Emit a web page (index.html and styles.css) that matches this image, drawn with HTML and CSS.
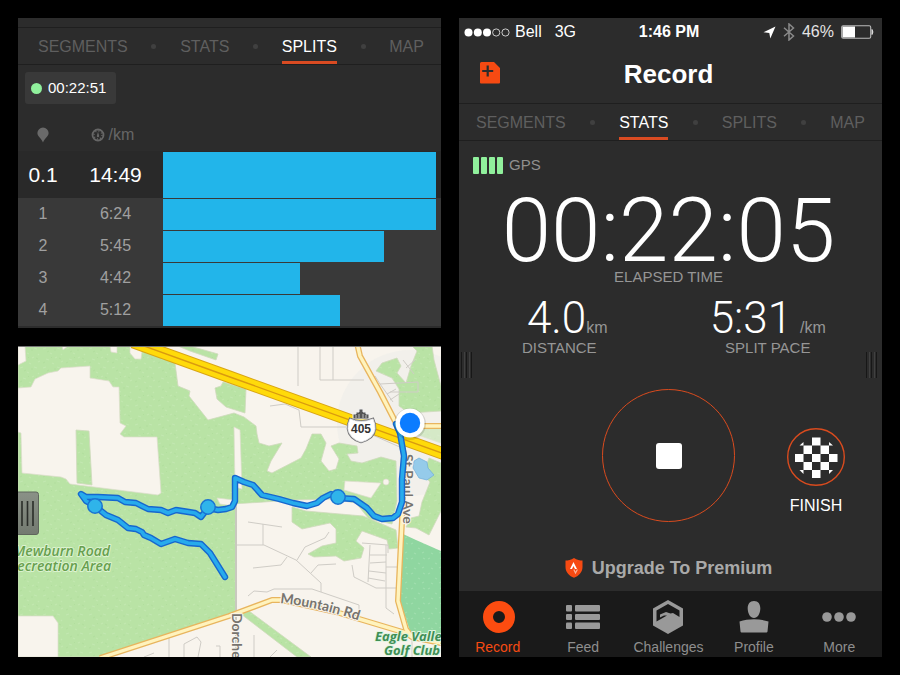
FILE: index.html
```html
<!DOCTYPE html>
<html lang="en">
<head>
<meta charset="utf-8">
<meta name="viewport" content="width=device-width, initial-scale=1">
<title>Record</title>
<link rel="stylesheet" href="styles.css">
</head>
<body>
<main class="board">
  <div class="column">
    <section class="panel splits">
      <div class="strip"></div>
      <nav class="tabs">
        <a href="#segments">SEGMENTS</a><i class="dot"></i>
        <a href="#stats">STATS</a><i class="dot"></i>
        <a href="#splits" class="current">SPLITS</a><i class="dot"></i>
        <a href="#map">MAP</a>
      </nav>
      <div class="chip"><i class="live"></i>00:22:51</div>
      <table class="split-table">
        <thead>
          <tr>
            <th class="lap"><svg width="12" height="16" viewBox="0 0 12 16"><path d="M6 0.500a5.600 5.600 0 0 1 5.600 5.600C11.600 9.300 8 11 6 15.500 4 11 .4 9.300 .4 6.100A5.600 5.600 0 0 1 6 .5z" fill="#6a6a6a"/></svg></th>
            <th class="pace"><span class="pace-head"><svg width="14" height="14" viewBox="0 0 14 14"><circle cx="7" cy="7" r="5.500" fill="none" stroke="#666" stroke-width="1.800"/><circle cx="7" cy="7" r="4" fill="none" stroke="#666" stroke-width="1.500" stroke-dasharray="1 2.140"/><path d="M7 3.500 8.200 8a1.200 1.200 0 0 1-2.400 0z" fill="#666"/></svg>/km</span></th>
            <th></th>
          </tr>
        </thead>
        <tbody>
          <tr class="now"><td>0.1</td><td>14:49</td><td class="track"><div class="bar" style="width:100%"></div></td></tr>
          <tr><td>1</td><td>6:24</td><td class="track"><div class="bar" style="width:100%"></div></td></tr>
          <tr><td>2</td><td>5:45</td><td class="track"><div class="bar" style="width:81%"></div></td></tr>
          <tr><td>3</td><td>4:42</td><td class="track"><div class="bar" style="width:50%"></div></td></tr>
          <tr><td>4</td><td>5:12</td><td class="track"><div class="bar" style="width:65%"></div></td></tr>
        </tbody>
      </table>
    </section>

    <section class="panel map">
      <svg class="map-art" viewBox="0 0 423 311" role="img" aria-label="Route map">
        <defs>
          <pattern id="grass" width="23" height="19" patternUnits="userSpaceOnUse">
            <rect width="23" height="19" fill="#b9e3a5"/>
            <path d="M2 3l3-1M9 7l2 1M16 2l3 1M5 13l3 1M14 12l2-1M20 16l2-1M11 17l2 1M20 8l1 1" stroke="#c2e8b0" stroke-width="1.200"/>
            <path d="M6 6l2-1M13 4l2 0M18 12l2 1M2 17l2-1M10 11l1 1" stroke="#b1de9d" stroke-width="1"/>
          </pattern>
          <pattern id="golf" width="17" height="15" patternUnits="userSpaceOnUse">
            <rect width="17" height="15" fill="#8fd6a0"/>
            <path d="M2 3l2-1M9 7l2 1M14 2l2 1M5 12l2 1M13 12l2-1" stroke="#a0deae" stroke-width="1.200"/>
          </pattern>
          <path id="avenue" d="M385 108V190"/>
          <path id="mountain" d="M262 257Q300 261 345 276"/>
          <path id="route" d="M207 231 192 207 183 198 170 197 157 193 143 198 133 192 126 189 124 186 118 183 110 182 100 174 88 169 77 160 68 155 63 148 68 151 80 151 100 152 107 156 118 157 130 163 143 164 150 167 158 164 177 167 183 171 190 162 200 164 208 163 214 161 217 155V132L226 136 235 139 244 149 261 153 275 157 289 160 299 157 305 152 313 148 320 152 336 153 349 162 356 170 364 173 375 172 380 168 384 156V133L386 110 382 87 378 78"/>
          <linearGradient id="grip" x1="0" y1="0" x2="0" y2="1"><stop offset="0" stop-color="#8a9187"/><stop offset="1" stop-color="#737a70"/></linearGradient>
        </defs>
        <rect width="423" height="311" fill="#f8f4ed"/>
        <circle cx="392" cy="77" r="73" fill="#eeeeea" opacity=".65"/>
        <g fill="url(#grass)" stroke="#cfd9bd" stroke-width=".8">
          <path d="M0 0H120L157 17 160 40 172 45 171 50 190 74 216 67 226 71 238 80 239 88 241 97 251 100 264 97 253 115 249 125 254 127 283 112 288 103 294 88 303 88 308 97 303 115 311 125 318 123 321 113 313 100 321 97 339 100 340 107 329 108 333 115 344 117 363 111 378 115 379 155 374 178 351 173 338 157 313 153 274 154 218 158V268L82 311H0z"/>
          <path d="M197 42 203 40 205 36 228 43 227 67 208 61 199 53z"/>
          <path d="M160 0H172L200 8 198 14 172 5z"/>
          <path d="M274 161 288 165 345 170 378 184 380 202 371 203 369 194 344 185 338 195 346 202 343 212 326 215 318 210 296 211 290 208 304 200 318 197 318 183 312 177 284 183 274 176z"/>
          <path d="M358 25 364 17 379 12 383 20 379 27 388 37 393 20 399 5 394 0H414L416 14 423 40V65L391 67 381 60 381 43 374 32z"/>
          <path d="M397 88 423 97V80H406z" opacity=".5"/>
          <path d="M423 117 411 112 405 128 412 136 404 156 401 170 393 172 388 181 398 182 411 189 423 165z"/>
          <path d="M223 268 231 265 293 311H279z"/>
        </g>
        <g fill="#f8f4ed" stroke="#dddccb" stroke-width=".7">
          <path d="M0 42 13 41 17 33 30 27 40 25 43 22 72 20V32L91 35 95 41H101L102 77 108 80 102 88 106 91 139 91 143 147 140 149 52 138 48 133 43 131 4 127 3 87 0 86z"/>
          <path d="M0 0H7L8 15 0 19zM92 0H99V7L93 6zM112 0H119L124 5 123 13 117 13 112 7zM44 0H50L45 4z"/>
          <path d="M0 270H35L40 277V311H0z"/>
          <path d="M216 81 222 84 224 143 217 141zM327 135 363 137 353 152 326 144z"/>
          <path d="M199 152 216 154V160L202 158z"/>
          <path d="M220 158 262 157 273 162 273 177 218 177z" stroke="none"/>
          <circle cx="368" cy="136" r="3"/>
        </g>
        <path d="M58 84 71 85 74 139 59 137z" fill="url(#grass)" stroke="#cfd9bd" stroke-width=".8"/>
        <path d="M396 115 401 112 409 116 410 122 416 129 409 134 401 132 395 122z" fill="#95cbea" stroke="#6faed8" stroke-width=".7"/>
        <path d="M385 188 398 194 423 205V296L394 291 382 255z" fill="url(#golf)"/>
        <g fill="none" stroke="#cfccc6" stroke-width="1">
          <path d="M280 0V40M302 0V34H346M315 0V34M252 60 267 58 281 64 283 81H328M350 87 384 102M357 30 362 38 400 36V46H372M362 38 375 56M372 54 381 48M369 48 378 43M385 14 396 28M388 22 397 14"/>
          <path d="M230 176 264 181M245 178V199M218 199H246L278 214 303 237V246M235 222 263 219 269 211M279 214 287 201 307 192 311 186M293 227 300 219 318 218"/>
          <path d="M344 197 370 199V207M352 199 350 236M352 209H369M352 217 368 216M351 225 368 227M350 232 367 235M368 199V262L376 268M334 219 336 231 358 242H378M368 221H379"/>
          <path d="M230 250 236 245 249 246 256 243 294 243 341 259V269M151 291V311M166 311V298L179 291 183 296 180 311M198 300H202V311M126 311 136 307M236 289V311M252 311 259 304M394 292V311"/>
          <path d="M218 156V311" stroke="#c9c9bf" stroke-width="2"/>
        </g>
        <g fill="none" stroke-linejoin="round">
          <g stroke="#e8b55e" stroke-width="6">
            <path d="M339 -3 342 10 362 46 378 77 386 108 384 175 380 255 388 283 394 291 423 297"/>
            <path d="M82 312 211 270 254 254H264L318 266 388 287 394 291M395 80H423"/>
          </g>
          <g stroke="#fff3bd" stroke-width="3.400">
            <path d="M339 -3 342 10 362 46 378 77 386 108 384 175 380 255 388 283 394 291 423 297"/>
            <path d="M82 312 211 270 254 254H264L318 266 388 287 394 291M395 80H423"/>
          </g>
          <path d="M115 -4 212 31 429 109" stroke="#d9a514" stroke-width="12.500"/>
          <path d="M115 -4 212 31 429 109" stroke="#ffda0a" stroke-width="10.500"/>
          <path d="M115 -4 212 31 429 109" stroke="#d99a10" stroke-width="1.400"/>
        </g>
        <g class="label road">
          <text><textPath href="#avenue">St Paul Ave</textPath></text>
          <text><textPath href="#mountain">Mountain Rd</textPath></text>
          <text transform="translate(214 267) rotate(90)">Dorchester Rd</text>
        </g>
        <g class="label park">
          <text x="92" y="210" text-anchor="end">Mewburn Road</text>
          <text x="93" y="225" text-anchor="end">Recreation Area</text>
        </g>
        <g class="label club">
          <text x="357" y="295">Eagle Valley</text>
          <text x="366" y="309">Golf Club</text>
        </g>
        <g fill="none" stroke-linecap="round" stroke-linejoin="round">
          <use href="#route" stroke="#1667cf" stroke-width="6.400"/>
          <use href="#route" stroke="#27abec" stroke-width="3.600"/>
        </g>
        <g fill="#2fb4ea" stroke="#1a73d2" stroke-width="1.500"><circle cx="77" cy="160" r="7.200"/><circle cx="190" cy="161" r="7.200"/><circle cx="320" cy="151" r="7.200"/></g>
        <g>
          <path d="M335 73V68h3v-2h3v-3h4v3h3v2h3v5z" fill="#555" stroke="#eee" stroke-width="1"/>
          <path d="M338 72v-3M341 72v-4M345 72v-4M348 72v-3" stroke="#ddd" stroke-width=".8"/>
          <path d="M332 73Q343 78 355 73 360 84 353 91 348 95 343 96 338 95 334 91 327 84 332 73z" fill="#fff" stroke="#77777a" stroke-width="2.600"/>
          <path d="M332 73Q343 78 355 73 360 84 353 91 348 95 343 96 338 95 334 91 327 84 332 73z" fill="#fff" stroke="#eee" stroke-width=".8"/>
          <text class="shield" x="343" y="87" text-anchor="middle">405</text>
        </g>
        <circle cx="392" cy="78" r="16" fill="#000" opacity=".12"/>
        <circle cx="392" cy="77" r="14.500" fill="#fff"/>
        <circle cx="392" cy="77" r="10.200" fill="#0b7cff"/>
        <path d="M-3 146H18a2.500 2.500 0 0 1 2.500 2.500V186a2.500 2.500 0 0 1-2.500 2.500H-3z" fill="url(#grip)" stroke="#5f665c"/>
        <path d="M4 155V180M9.500 155V180M15 155V180" stroke="#2a2d29" stroke-width="1.600"/>
        <path d="M0 .5H423" stroke="#777"/>
      </svg>
    </section>
  </div>

  <section class="panel phone">
    <div class="status">
      <span class="carrier"><svg width="46" height="9" viewBox="0 0 46 9"><g fill="#fff"><circle cx="4.500" cy="4.500" r="4"/><circle cx="13.800" cy="4.500" r="4"/><circle cx="23" cy="4.500" r="4"/></g><g fill="none" stroke="#ddd" stroke-width=".9"><circle cx="32.200" cy="4.500" r="3.600"/><circle cx="41.500" cy="4.500" r="3.600"/></g></svg><span>Bell</span><span class="net">3G</span></span>
      <b>1:46 PM</b>
      <span class="sensors">
        <svg width="13" height="13" viewBox="0 0 13 13"><path d="M12.500.5 7.300 12.500 6.300 7 .5 6.200z" fill="#fff"/></svg>
        <svg width="12" height="18" viewBox="0 0 12 18"><path d="M1 4.800 10.500 13 6 17V1L10.500 5 1 13.200" fill="none" stroke="#8a8a8a" stroke-width="1.500"/></svg>
        <span>46%</span>
        <svg width="33" height="14" viewBox="0 0 33 14"><rect x=".7" y=".7" width="29" height="12.600" rx="1.500" fill="none" stroke="#bbb" stroke-width="1.100"/><rect x="1.500" y="1.500" width="12.500" height="11" fill="#fff"/><path d="M31 4.500q1.800 2.500 0 5z" fill="#ddd" stroke="#ddd"/></svg>
      </span>
    </div>
    <header class="title">
      <button class="add" aria-label="Add"><svg width="20" height="22" viewBox="0 0 20 22"><path d="M1.500 0H14l6 6V20.500a1 1 0 0 1-1 1H1a1 1 0 0 1-1-1V1.500A1.500 1.500 0 0 1 1.500 0z" fill="#f64a12"/><path d="M7.700 3.500v11M2.200 9h11" stroke="#2c2c2c" stroke-width="2.200"/></svg></button>
      <h1>Record</h1>
    </header>
    <nav class="tabs">
      <a href="#segments">SEGMENTS</a><i class="dot"></i>
      <a href="#stats" class="current">STATS</a><i class="dot"></i>
      <a href="#splits">SPLITS</a><i class="dot"></i>
      <a href="#map">MAP</a>
    </nav>
    <div class="gps"><span class="signal"><i></i><i></i><i></i><i></i></span>GPS</div>
    <div class="elapsed"><div class="clock">00:22:05</div><div class="caption">ELAPSED TIME</div></div>
    <div class="pair">
      <div><div class="figure distance">4.0<small>km</small></div><div class="caption">DISTANCE</div></div>
      <div><div class="figure">5:31<small class="rate">/km</small></div><div class="caption">SPLIT PACE</div></div>
    </div>
    <div class="controls">
      <button class="stop" aria-label="Stop"><i></i></button>
      <button class="finish">
        <svg width="58" height="58" viewBox="0 0 58 58"><circle cx="29" cy="29" r="28.300" fill="none" stroke="#d94b1e" stroke-width="1.400"/><g fill="#fff"><path d="M25 9.500h8.500V17.500H25zM16.500 17.500H25v8.500h-8.500zM33.500 17.500H42v8.500h-8.500zM8 26h8.500v8H8zM25 26h8.500v8H25zM42 26h8.500v8H42zM16.500 34H25v8h-8.500zM33.500 34H42v8h-8.500zM25 42h8.500v8H25z"/><path d="M16.500 14V17.500H12.500zM42 14V17.500h4zM16.500 46V42h-4zM42 46V42h4z"/></g></svg>
        <span>FINISH</span>
      </button>
    </div>
    <a class="upgrade" href="#premium"><svg width="18" height="20" viewBox="0 0 18 20"><path d="M9 0C12 2 15 2.500 17.500 2.500V9c0 5.500-4 9-8.500 10.800C4.500 18 .5 14.500 .5 9V2.500C3 2.500 6 2 9 0z" fill="#f64a12"/><path d="M5 11 8.500 4 12 11H10L8.500 8 7 11z" fill="#fff"/><path d="M8.800 11.500 10.500 15 12.400 11.500" fill="none" stroke="#fbb59d" stroke-width="1.200"/></svg>Upgrade To Premium</a>
    <nav class="bottom">
      <a href="#record" class="active"><svg width="34" height="34" viewBox="0 0 34 34"><circle cx="18" cy="17" r="11" fill="none" stroke="#fc4c10" stroke-width="10"/></svg>Record</a>
      <a href="#feed"><svg width="34" height="34" viewBox="0 0 34 34"><g fill="#999"><rect y="5" width="6" height="6.500" rx="1"/><rect x="9" y="5" width="25" height="6.500" rx="1"/><rect y="14" width="6" height="6" rx="1"/><rect x="9" y="14" width="25" height="6" rx="1"/><rect y="22.500" width="6" height="6.500" rx="1"/><rect x="9" y="22.500" width="25" height="6.500" rx="1"/></g></svg>Feed</a>
      <a href="#challenges"><svg width="34" height="34" viewBox="0 0 34 34"><path fill-rule="evenodd" d="M17 0 32 8.500V25.500L17 34 2 25.500V8.500zM17 4 5.500 10.500V21.500L16 15.500 13 15.500 9 17.500V14.500L15 12 19.500 13.500 22 13 28.500 17V10.500z" fill="#999"/></svg>Challenges</a>
      <a href="#profile"><svg width="34" height="34" viewBox="0 0 34 34"><path d="M17 1C21.500 1 23.500 4.500 23.300 9 23 14 20.500 18 17 18 13.500 18 11 14 10.700 9 10.500 4.500 12.500 1 17 1zM2.500 21.500C7 20 12 19.300 17 19.300S27 20 31.500 21.500L30.500 31.500Q30.300 32.500 29.500 32.500H4.500Q3.700 32.500 3.500 31.500z" fill="#999"/></svg>Profile</a>
      <a href="#more"><svg width="34" height="34" viewBox="0 0 34 34"><g fill="#999"><circle cx="5" cy="17" r="4.800"/><circle cx="17" cy="17" r="4.800"/><circle cx="29" cy="17" r="4.800"/></g></svg>More</a>
    </nav>
    <i class="grip left"></i><i class="grip right"></i>
  </section>
</main>
</body>
</html>
```
FILE: styles.css
```css
* { box-sizing: border-box; }
body {
  margin: 0;
  background: #000;
  color: #fff;
  font: 16px/20px "Liberation Sans", Arial, sans-serif;
}
a { color: inherit; text-decoration: none; }
button { border: 0; padding: 0; background: none; color: inherit; font: inherit; }
svg { display: block; flex: none; }

.board {
  display: grid;
  grid-template-columns: 1fr 1fr;
  gap: 18px;
  padding: 18px;
  align-items: start;
}
.column { display: grid; gap: 18px; }
.panel { position: relative; background: #2c2c2c; overflow: hidden; }

.tabs {
  display: flex;
  justify-content: space-between;
  align-items: stretch;
  height: 38px;
  padding: 0 17px;
  border-top: 1px solid #1f1f1f;
  border-bottom: 1px solid #1f1f1f;
  color: #5f5f5f;
}
.tabs a { padding-top: 9px; border-bottom: 3px solid transparent; }
.tabs .current { color: #fff; border-color: #d94b22; }
.dot { align-self: center; width: 5px; height: 5px; border-radius: 50%; background: #404040; }

/* Splits */
.splits { padding-bottom: 2px; }
.splits .tabs { padding-left: 20px; }
.strip { height: 9px; }
.chip {
  display: inline-flex;
  align-items: center;
  gap: 6px;
  height: 32px;
  margin: 7px 7px 15px;
  padding: 0 10px 0 6px;
  border-radius: 3px;
  background: #393939;
  font-size: 15px;
  vertical-align: top;
}
.live { width: 11px; height: 11px; border-radius: 50%; background: #90f09c; }
.split-table { width: 100%; border-collapse: collapse; table-layout: fixed; text-align: center; }
.split-table th { height: 32px; padding: 0; color: #666; font-weight: normal; }
.lap { width: 50px; }
.lap svg { margin: 0 auto; }
.pace { width: 95px; }
.pace-head { display: flex; align-items: center; justify-content: center; gap: 4px; padding-right: 6px; }
.split-table td { height: 32px; padding: 0; background: #393939; color: #a0a0a0; }
.split-table .now td { height: 47px; background: #292929; color: #fff; font-size: 21px; }
.split-table .track { padding: 1px 5px 0 0; }
.bar { height: 31px; background: #22b5ea; }
.now .bar { height: 46px; }

/* Map */
.map-art { width: 100%; height: auto; }
.label { paint-order: stroke; stroke-linejoin: round; font-family: "Open Sans", "Noto Sans", sans-serif; }
.road { font-family: Lato, "Open Sans", sans-serif; font-size: 14px; font-weight: 700; fill: #77746f; stroke: #f8f4ed; stroke-width: 2px; }
.park { font-size: 14px; font-weight: 600; font-style: italic; fill: #67a04e; stroke: #dcf2d0; stroke-width: 2px; }
.club { font-size: 13px; font-weight: 700; font-style: italic; fill: #3f8f55; stroke: #e0f5e2; stroke-width: 2px; }
.shield { font: bold 12px "Liberation Sans", Arial, sans-serif; fill: #333; }

/* Phone */
.status {
  display: grid;
  grid-template-columns: 1fr auto 1fr;
  align-items: center;
  height: 28px;
  padding: 0 8px 0 5px;
}
.carrier, .sensors { display: flex; align-items: center; gap: 5px; }
.sensors { justify-content: flex-end; gap: 7px; color: #e4e4e4; }
.net { margin-left: 8px; }
.title { position: relative; display: grid; place-items: center; height: 57px; padding: 0 4px 2px 0; }
.title h1 { margin: 0; font-size: 26px; line-height: 30px; }
.add { position: absolute; left: 21px; top: 16px; }
.gps { display: flex; align-items: center; gap: 6px; height: 48px; padding-left: 14px; color: #909090; font-size: 15px; }
.signal { display: flex; gap: 2px; }
.signal i { width: 6px; height: 17px; border-radius: 1px; background: #90f09c; }
.elapsed { padding: 10px 4px 0 0; text-align: center; }
.clock { font: 300 89px/64px Roboto, "Open Sans", sans-serif; }
.caption { color: #969696; font-size: 15px; line-height: 20px; }
.elapsed .caption { padding-top: 4px; }
.pair { display: grid; grid-template-columns: 1fr 1fr; margin-left: -4px; padding: 11px 10px 0 0; text-align: center; }
.figure { font: 300 44px/40px Roboto, "Open Sans", sans-serif; }
.distance { padding-left: 16px; }
.figure small { color: #969696; font: 16px "Liberation Sans", Arial, sans-serif; }
.figure .rate { margin-left: 8px; }
.controls {
  display: grid;
  grid-template-columns: 1fr auto 1fr;
  align-items: center;
  padding: 31px 4px 0 0;
}
.stop {
  grid-column: 2;
  display: grid;
  place-items: center;
  width: 133px;
  height: 133px;
  border: 1px solid #d94b1e;
  border-radius: 50%;
}
.stop i { width: 26px; height: 26px; border-radius: 3px; background: #fff; }
.finish { justify-self: end; display: grid; justify-items: center; gap: 10px; margin: 32px 33px 0 0; }
.upgrade {
  display: flex;
  align-items: center;
  justify-content: center;
  gap: 9px;
  height: 46px;
  margin-top: 23px;
  padding-right: 4px;
  color: #a9a9a9;
  font-size: 18px;
  font-weight: bold;
}
.bottom {
  display: grid;
  grid-template-columns: repeat(5, 1fr);
  margin-left: -4px;
  padding: 9px 0 2px;
  background: #1a1a1a;
  color: #8e8e8e;
  font-size: 14px;
  line-height: 16px;
}
.bottom a { display: grid; justify-items: center; gap: 5px; }
.bottom .active { color: #f64a12; }
.grip {
  position: absolute;
  top: 334px;
  width: 12px;
  height: 26px;
  background: repeating-linear-gradient(90deg, #171717 0 1px, #2c2c2c 1px 3px, #404040 3px 4px, #2c2c2c 4px 5px);
}
.grip.left { left: 2px; }
.grip.right { right: 4px; }
```
